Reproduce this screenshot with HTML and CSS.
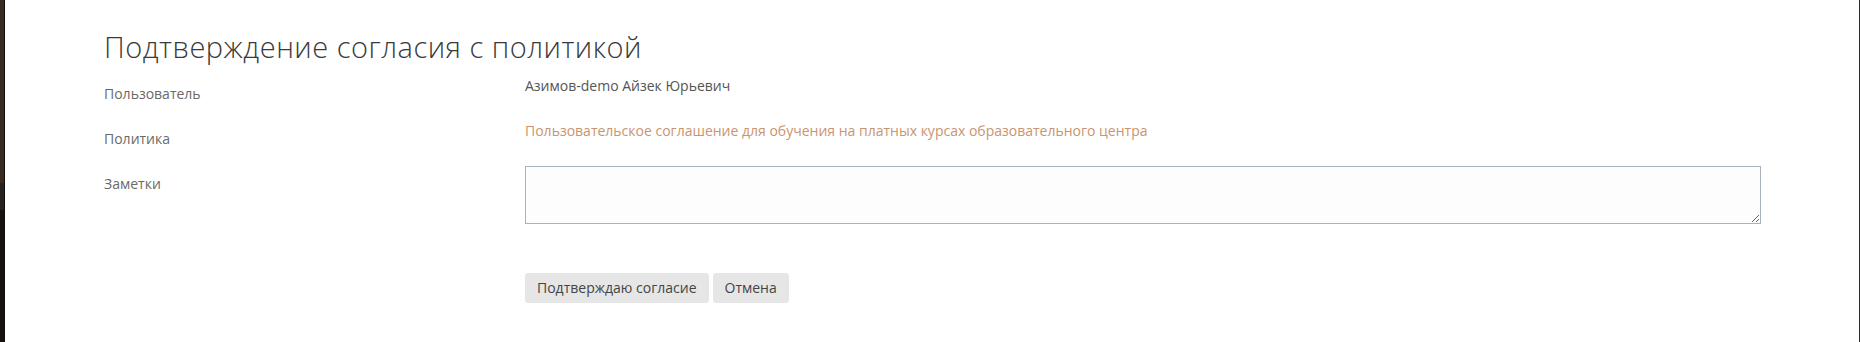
FILE: index.html
```html
<!DOCTYPE html>
<html lang="ru">
<head>
  <meta charset="UTF-8">
  <meta name="viewport" content="width=device-width, initial-scale=1.0">
  <title>Подтверждение согласия с политикой</title>
  <link rel="stylesheet" href="styles.css">
</head>
<body>

  <div class="frame">
    <div class="edge-left"></div>

    <!-- Форма подтверждения -->
    <div class="page">
      <h2 class="title">Подтверждение согласия с политикой</h2>

      <div class="form-row">
        <div class="form-label">Пользователь</div>
        <div class="form-value">Азимов-demo Айзек Юрьевич</div>
      </div>

      <div class="form-row">
        <div class="form-label">Политика</div>
        <div class="form-value"><a class="policy-link" href="#">Пользовательское соглашение для обучения на платных курсах образовательного центра</a></div>
      </div>

      <div class="form-row form-row-notes">
        <div class="form-label">Заметки</div>
        <div class="form-value"><textarea class="notes"></textarea></div>
      </div>

      <div class="actions">
        <button class="btn">Подтверждаю согласие</button>
        <button class="btn">Отмена</button>
      </div>
    </div>

    <div class="edge-right"></div>
  </div>

</body>
</html>
```

FILE: styles.css
```css
body {
  font-family: 'Open Sans', 'DejaVu Sans', sans-serif;
  margin: 0;
  padding: 0;
  background-color: #ffffff;
  color: #555555;
}

.frame {
  display: flex;
  height: 342px;
}

/* Края окна */
.edge-left {
  width: 4px;
  border-right: 1px solid #0f0c0a;
  background: linear-gradient(#3a2b21 0, #3a2b21 183px, #25221f 183px, #25221f 210px, #16120f 210px);
}

.edge-right {
  width: 1px;
  background-color: #2b2b2b;
}

.page {
  flex: 1;
  padding: 0 98px 0 99px;
}

/* Заголовок */
.title {
  font-size: 29px;
  font-weight: 300;
  line-height: 1.1;
  letter-spacing: 0.5px;
  color: #3a3a3a;
  margin: 31px 0 13px 0;
}

/* Строки формы */
.form-row {
  display: grid;
  grid-template-columns: 421px 1fr;
  height: 45px;
  font-size: 14px;
  line-height: 20px;
}

.form-row-notes {
  height: auto;
}

.form-label {
  padding-top: 8px;
  color: #6a6a6a;
}

.form-value {
  color: #555555;
}

.policy-link {
  color: #c9946f;
  text-decoration: none;
}

.notes {
  display: block;
  box-sizing: border-box;
  width: 100%;
  height: 58px;
  border: 1px solid #aab2bc;
  border-radius: 0;
  background-color: #fdfdfd;
  font-family: inherit;
  font-size: 14px;
}

/* Кнопки */
.actions {
  display: flex;
  gap: 4px;
  margin-left: 421px;
  margin-top: 49px;
}

.btn {
  font-family: inherit;
  font-size: 14px;
  line-height: 20px;
  padding: 5px 12px;
  border: none;
  border-radius: 3px;
  background-color: #e6e6e6;
  color: #444444;
  cursor: pointer;
}
```
